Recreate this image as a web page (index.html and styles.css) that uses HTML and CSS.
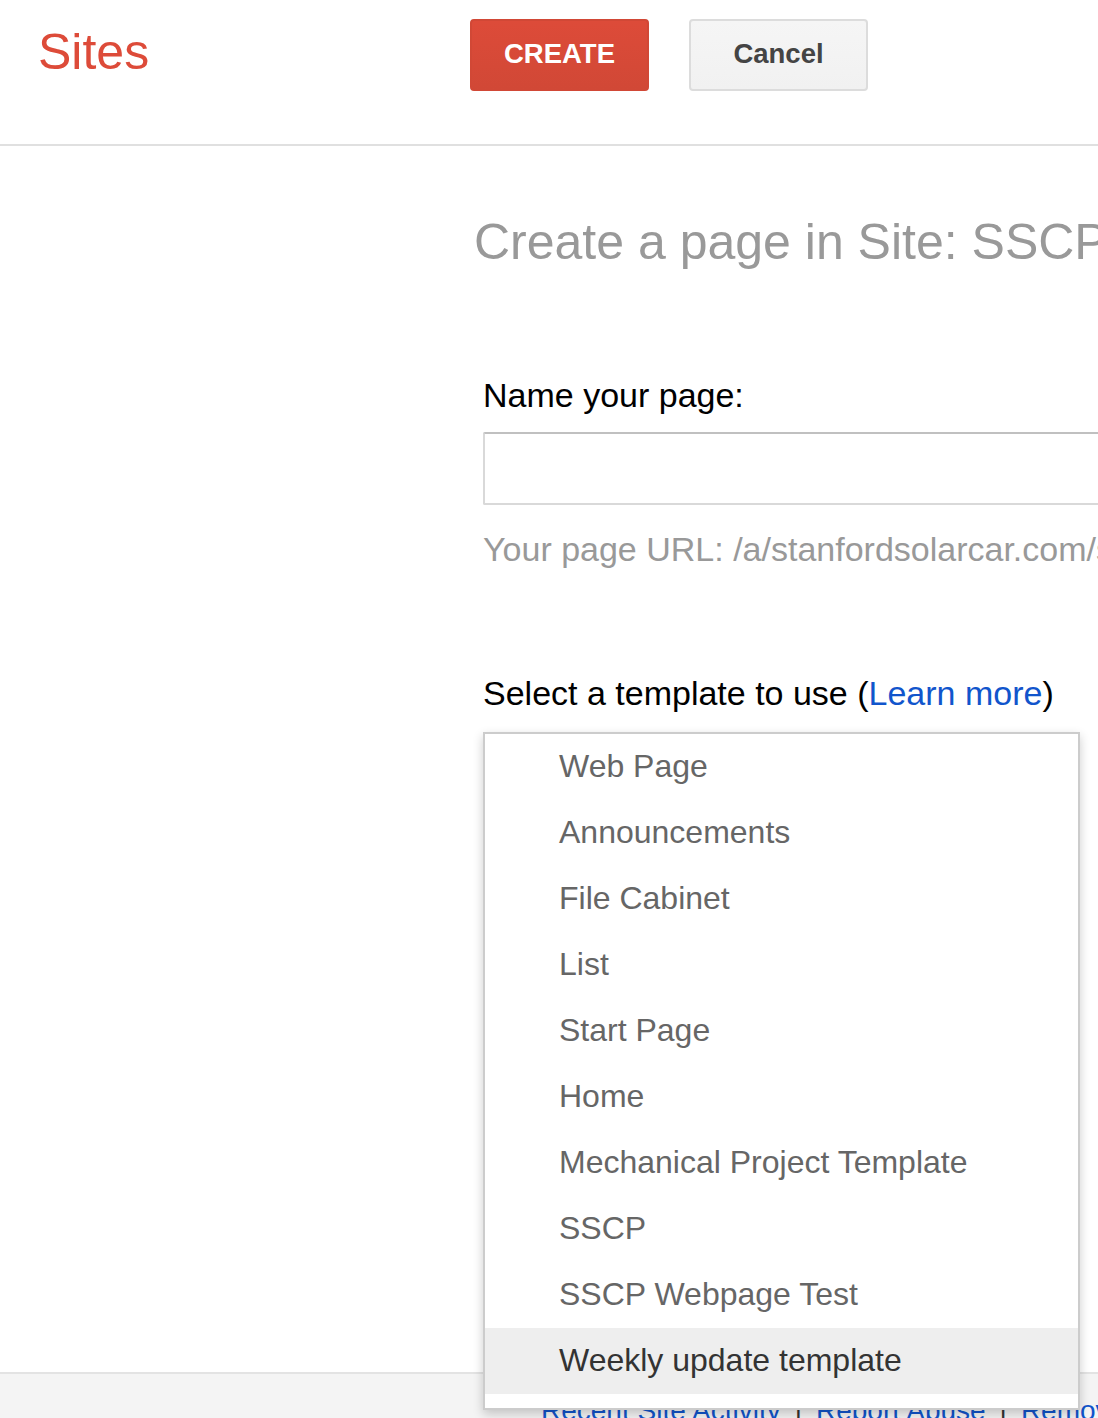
FILE: index.html
```html
<!DOCTYPE html>
<html>
<head>
<meta charset="utf-8">
<title>Create a page</title>
<link rel="stylesheet" href="styles.css">
</head>
<body>
<header class="topbar">
  <div class="logo">Sites</div>
  <div class="actions">
    <button class="btn btn-create">CREATE</button>
    <button class="btn btn-cancel">Cancel</button>
  </div>
</header>
<main class="main">
  <h1 class="title">Create a page in Site: SSCP Wiki</h1>
  <section class="form">
    <div class="label">Name your page:</div>
    <input class="name-input" type="text">
    <div class="url">Your page URL: /a/stanfordsolarcar.com/sscp/</div>
    <div class="label label-template">Select a template to use (<a class="link" href="#">Learn more</a>)</div>
    <div class="template-picker">
      <div class="trigger"></div>
      <ul class="menu">
        <li class="item">Web Page</li>
        <li class="item">Announcements</li>
        <li class="item">File Cabinet</li>
        <li class="item">List</li>
        <li class="item">Start Page</li>
        <li class="item">Home</li>
        <li class="item">Mechanical Project Template</li>
        <li class="item">SSCP</li>
        <li class="item">SSCP Webpage Test</li>
        <li class="item item-active">Weekly update template</li>
      </ul>
    </div>
  </section>
</main>
<footer class="footer">
  <a class="flink" href="#">Recent Site Activity</a><span class="sep">|</span><a class="flink" href="#">Report Abuse</a><span class="sep">|</span><a class="flink" href="#">Remove Access</a>
</footer>
</body>
</html>
```
FILE: styles.css
```css
html, body {
  margin: 0;
  padding: 0;
}
body {
  font-family: "Liberation Sans", Arial, Helvetica, sans-serif;
  background: #fff;
  width: 1098px;
  overflow: hidden;
  color: #000;
}
.topbar {
  display: flex;
  align-items: flex-start;
  height: 144px;
  border-bottom: 2px solid #e0e0e0;
  padding-left: 38px;
  box-sizing: content-box;
}
.logo {
  width: 432px;
  font-size: 50px;
  color: #dd4b39;
  margin-top: 23px;
  line-height: normal;
}
.actions {
  display: flex;
  gap: 40px;
  margin-top: 19px;
}
.btn {
  width: 179px;
  height: 72px;
  border-radius: 4px;
  font-family: "Liberation Sans", Arial, sans-serif;
  font-weight: bold;
  font-size: 27.5px;
  display: flex;
  align-items: center;
  justify-content: center;
  padding: 0 0 3px 0;
  margin: 0;
  box-sizing: border-box;
}
.btn-create {
  background: linear-gradient(#dd4b39, #d14836);
  border: 2px solid #d14836;
  color: #fff;
}
.btn-cancel {
  background: linear-gradient(#f5f5f5, #f1f1f1);
  border: 2px solid #dcdcdc;
  color: #444;
}
.main {
  padding-left: 474px;
  padding-top: 67px;
  height: 1226px;
  box-sizing: border-box;
}
.title {
  margin: 0;
  font-weight: normal;
  font-size: 50px;
  line-height: normal;
  color: #999;
  white-space: nowrap;
}
.form {
  padding-left: 9px;
  margin-top: 105px;
}
.label {
  font-size: 34px;
  line-height: normal;
  color: #000;
  white-space: nowrap;
}
.name-input {
  display: block;
  margin-top: 17px;
  width: 720px;
  height: 73px;
  box-sizing: border-box;
  border: 2px solid #d9d9d9;
  border-top-color: #c0c0c0;
  border-radius: 2px;
  background: #fff;
  padding: 0;
}
.url {
  margin-top: 25px;
  font-size: 34px;
  line-height: normal;
  color: #999;
  white-space: nowrap;
}
.label-template {
  margin-top: 105px;
}
.link {
  color: #1155cc;
  text-decoration: none;
}
.template-picker {
  position: relative;
  margin-top: 19px;
}
.trigger {
  height: 72px;
}
.menu {
  position: absolute;
  top: 0;
  left: 0;
  z-index: 10;
  width: 597px;
  box-sizing: border-box;
  margin: 0;
  padding: 0 0 14px 0;
  list-style: none;
  background: #fff;
  border: 2px solid #cccccc;
  box-shadow: 0 4px 10px rgba(0, 0, 0, 0.2);
}
.item {
  height: 66px;
  line-height: 64px;
  padding-left: 74px;
  font-size: 32px;
  color: #666;
  white-space: nowrap;
}
.item-active {
  background: #eeeeee;
  color: #333;
}
.footer {
  border-top: 2px solid #e3e3e3;
  background: #f4f4f4;
  height: 120px;
  padding: 21px 0 0 541px;
  font-size: 28px;
  line-height: normal;
  white-space: nowrap;
}
.flink {
  color: #1155cc;
  text-decoration: underline;
}
.sep {
  color: #333;
  margin: 0 14px;
}
```
